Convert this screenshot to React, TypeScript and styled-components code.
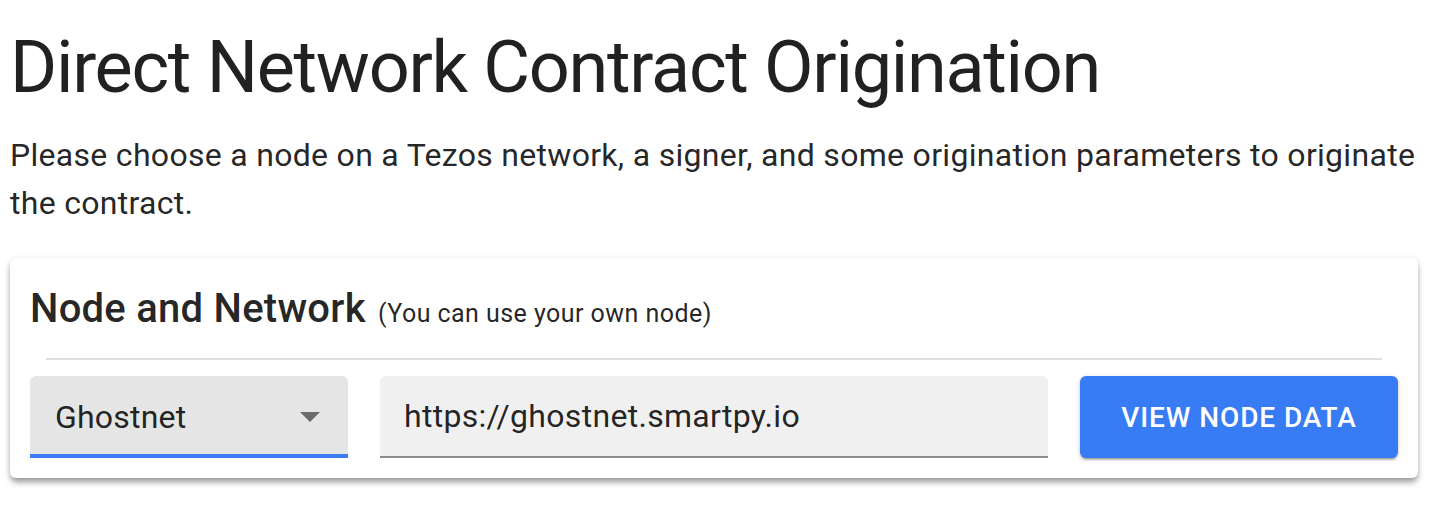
import { createGlobalStyle } from "styled-components";
import styled from "styled-components";

const GlobalStyle = createGlobalStyle`
  html, body {
    margin: 0;
    min-height: 100%;
    background: #ffffff;
    font-family: Roboto, "Noto Sans", Arial, sans-serif;
    color: rgba(0, 0, 0, 0.87);
  }
`;

export default function App() {
  return (
    <Page>
      <GlobalStyle />
      <Title>Direct Network Contract Origination</Title>
      <Intro>
        Please choose a node on a Tezos network, a signer, and some origination parameters to originate
        the contract.
      </Intro>
      <Card>
        <CardTitle>
          Node and Network <small>(You can use your own node)</small>
        </CardTitle>
        <Divider />
        <Row>
          <SelectBox>
            <span>Ghostnet</span>
            <svg width="20" height="10" viewBox="0 0 20 10">
              <path d="M0 0 L20 0 L10 10 Z" fill="#6b6b6b" />
            </svg>
          </SelectBox>
          <TextField type="text" defaultValue="https://ghostnet.smartpy.io" />
          <Button type="button">View Node Data</Button>
        </Row>
      </Card>
    </Page>
  );
}

const Page = styled.div`
  padding: 0 28px 29px 10px;
`;

const Title = styled.h1`
  margin: 25px 0 0;
  font-size: 72px;
  font-weight: 400;
  line-height: 1.2;
  letter-spacing: -1.3px;
`;

const Intro = styled.p`
  margin: 20px 0 0;
  font-size: 32px;
  line-height: 48px;
  font-weight: 400;
  letter-spacing: 0.3px;
`;

const Card = styled.section`
  margin-top: 31px;
  background: #fff;
  border-radius: 6px;
  padding: 27px 20px 20px;
  box-shadow: 0 5px 6px -1px rgba(0, 0, 0, 0.38), 0 1px 6px 0 rgba(0, 0, 0, 0.1);
`;

const CardTitle = styled.h2`
  margin: 0;
  font-size: 40px;
  font-weight: 500;
  line-height: 1.2;
  letter-spacing: 0.25px;

  small {
    margin-left: 2px;
    font-size: 25px;
    font-weight: 400;
    letter-spacing: 0.45px;
  }
`;

const Divider = styled.hr`
  margin: 25px 16px 16px;
  border: none;
  height: 2px;
  background: #e0e0e0;
`;

const Row = styled.div`
  display: grid;
  grid-template-columns: calc((100% + 32px) / 4 - 32px) 1fr calc((100% + 32px) / 4 - 32px);
  gap: 32px;
`;

const SelectBox = styled.div`
  height: 82px;
  box-sizing: border-box;
  display: flex;
  align-items: center;
  justify-content: space-between;
  padding: 4px 28px 0 25px;
  background: #e5e5e5;
  border-radius: 6px 6px 0 0;
  border-bottom: 4px solid #3b7cf4;
  font-size: 32px;
  letter-spacing: 0.2px;
`;

const TextField = styled.input`
  height: 82px;
  box-sizing: border-box;
  width: 100%;
  padding: 0 24px;
  border: none;
  border-bottom: 2px solid #8d8d8d;
  border-radius: 6px 6px 0 0;
  background: #f0f0f0;
  font-family: Roboto, "Noto Sans", Arial, sans-serif;
  font-size: 32px;
  letter-spacing: 0.3px;
  color: rgba(0, 0, 0, 0.87);
  outline: none;
`;

const Button = styled.button`
  height: 82px;
  border: none;
  border-radius: 6px;
  background: #377bf5;
  color: #fff;
  font-family: Roboto, "Noto Sans", Arial, sans-serif;
  font-size: 28px;
  font-weight: 500;
  letter-spacing: 0.9px;
  text-transform: uppercase;
  box-shadow: 0 3px 2px -2px rgba(0, 0, 0, 0.25), 0 2px 3px 0 rgba(0, 0, 0, 0.16),
    0 1px 5px 0 rgba(0, 0, 0, 0.12);
  cursor: pointer;
`;
